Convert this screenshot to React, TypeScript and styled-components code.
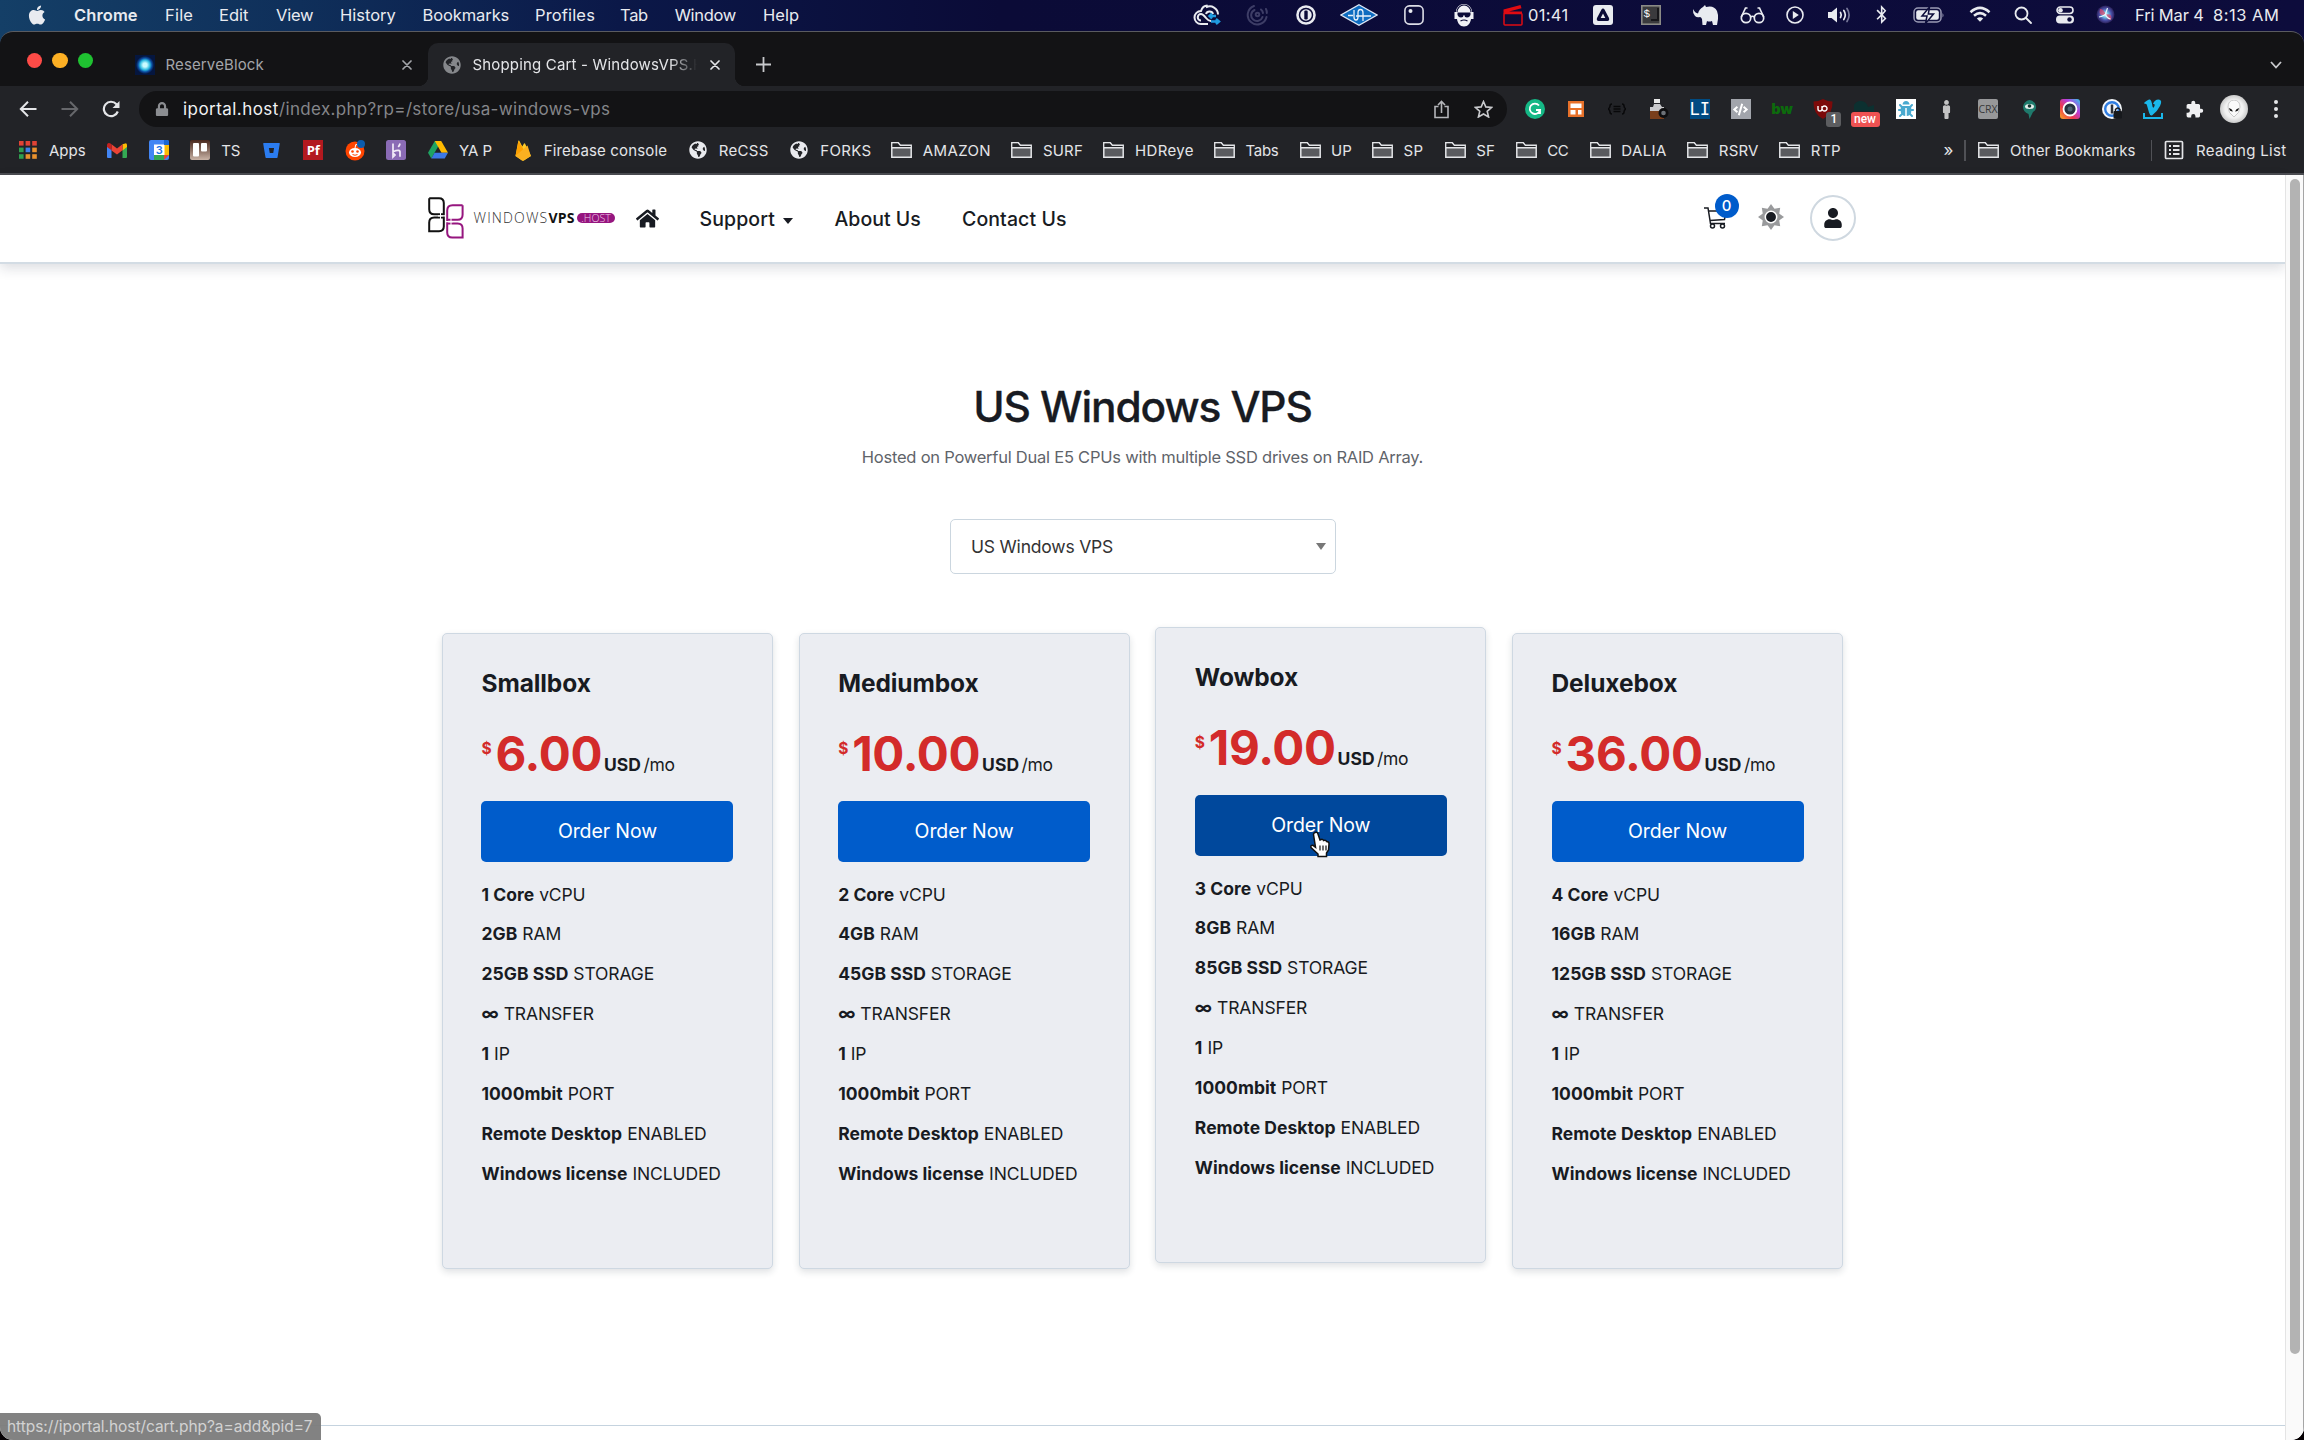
import React from "react";
import styled, { createGlobalStyle, css } from "styled-components";
import {
  FaApple, FaBluetoothB, FaHome, FaUser, FaPuzzlePiece, FaBug, FaBitbucket, FaCode, FaGlobeAmericas, FaLock, FaMale,
} from "react-icons/fa";

const Global = createGlobalStyle`
  * { box-sizing: border-box; }
  html, body { margin: 0; padding: 0; }
  body { background: #000; font-family: Inter, "Liberation Sans", sans-serif; overflow: hidden; }
`;

/* ---------- shared ---------- */
const Label = styled.span<{ $w?: number; $ls?: number; $ml?: number; $size?: number; $weight?: number; $color?: string }>`
  display: block;
  flex: none;
  white-space: nowrap;
  ${p => p.$w && css`width: ${p.$w}px;`}
  margin-left: ${p => p.$ml ?? 0}px;
  letter-spacing: ${p => p.$ls ?? 0}px;
  ${p => p.$size && css`font-size: ${p.$size}px;`}
  ${p => p.$weight && css`font-weight: ${p.$weight};`}
  ${p => p.$color && css`color: ${p.$color};`}
`;
const Slot = styled.span<{ $w?: number; $ml?: number; $c?: string; $fs?: number }>`
  position: relative;
  display: flex;
  flex: none;
  align-items: center;
  justify-content: center;
  width: ${p => p.$w ?? 20}px;
  min-height: 20px;
  margin-left: ${p => p.$ml ?? 0}px;
  color: ${p => p.$c ?? "inherit"};
  font-size: ${p => p.$fs ?? 20}px;
  svg { flex: none; display: block; }
`;
const Screen = styled.div`
  width: 2304px;
  height: 1440px;
  display: flex;
  flex-direction: column;
  overflow: hidden;
  background: linear-gradient(90deg, #143f67 0, #0f2f5a 300px, #0b1848 620px, #0b0b37 1000px, #0d0c3c 100%) top / 100% 60px no-repeat #050003;
`;

/* ---------- menu bar ---------- */
const MenuBar = styled.div`
  display: flex;
  align-items: center;
  height: 31px;
  padding-bottom: 1.500px;
  color: #e9ebf0;
  font-size: 16.500px;
  flex: none;
`;
const menus: [string, number, number, number][] = [
  ["File", 27, 27, 0.2], ["Edit", 27, 29, 0], ["View", 28, 37, -0.2], ["History", 27, 55, 0], ["Bookmarks", 27.5, 85.5, -0.1],
  ["Profiles", 27, 59, 0.15], ["Tab", 26, 28, -0.3], ["Window", 26.7, 61, -0.35], ["Help", 27.4, 35, 0],
];

const Cloud = () => (
  <svg width="28" height="24" viewBox="0 0 28 24" fill="none" stroke="#e9ebf0" strokeWidth="2">
    <path d="M13 4.500a8 8 0 0 1 12 7M8 21a6.500 6.500 0 0 1 0-13c1.200-4 4-5.500 6.500-5.500M8 21h7" />
    <path d="M8 17.500a3.200 3.200 0 0 1 0-6.500c2 0 3 1.500 5 4s3 3 5 3M13 11c1-3 6-3.500 7 0" />
    <path d="M23 13h-7m3-2.500L16.500 13l2.500 2.500M18 18.500h8m-3-2.500 3 2.500-3 2.500" stroke="#1f9be0" strokeWidth="2.400" />
  </svg>
);
const Spiral = () => (
  <svg width="22" height="22" viewBox="0 0 22 22" fill="none" stroke="#3d3d66" strokeWidth="2" strokeLinecap="round">
    <path d="M8 2a9.500 9.500 0 1 0 12.500 11M8.500 6a5.800 5.800 0 1 0 8 7M20 5a9 9 0 0 1 .8 4M15 5.500A6 6 0 0 1 17 9" /><circle cx="11.500" cy="10.500" r="1.800" />
  </svg>
);
const OnePass = () => (
  <svg width="20" height="20" viewBox="0 0 20 20"><circle cx="10" cy="10" r="9.800" fill="#e9ebf0" /><circle cx="10" cy="10" r="6.500" fill="none" stroke="#0b0b37" strokeWidth="1.500" /><rect x="8.300" y="5.500" width="3.400" height="9" rx="1.200" fill="#0b0b37" /></svg>
);
const Diamond = () => (
  <svg width="38" height="22" viewBox="0 0 38 22"><path d="M19 .8 37 11 19 21.200 1 11Z" fill="#0d6cc0" stroke="#dfe8f5" strokeWidth="1.300" /><path d="M8 11.500h5M14 6v7q0 3 2 3t2-3V9q0-3.500 2.500-3.500T23 9v8M16 12h15" fill="none" stroke="#e9f2fb" strokeWidth="1.300" /></svg>
);
const Tile = () => (
  <svg width="20" height="20" viewBox="0 0 20 20"><rect x=".9" y=".9" width="18.200" height="18.200" rx="4.500" fill="none" stroke="#dcdde6" strokeWidth="1.600" /><circle cx="6.500" cy="6" r="2" fill="#e9ebf0" /></svg>
);
const Beard = () => (
  <svg width="22" height="24" viewBox="0 0 22 24" fill="#f0f1f5"><path d="M3 9a8 8 0 0 1 16 0h1.500v7H18c-.5 4-3 7.500-7 7.500S4.500 20 4 16H1.500V9Z" /><path d="M4.500 9.500h13v2.500q-1 2.500-3.500 2.500T11.200 12h-.4q-.3 2.500-2.800 2.500T4.500 12Z" fill="#0b0b37" /><path d="M4 9a7 7 0 0 1 14 0M7.500 18q3.500-2 7 0" fill="none" stroke="#0b0b37" strokeWidth="1.200" /></svg>
);
const Clap = () => (
  <svg width="20" height="22" viewBox="0 0 20 22"><rect x="1" y="9.500" width="18" height="11.500" rx="1" fill="none" stroke="#e00b12" strokeWidth="1.500" /><path d="M.5 5.500 17.500 1l1 3.200L6 7.500h13V10H.5Z" fill="#e00b12" /></svg>
);
const AppA = () => (
  <svg width="20" height="20" viewBox="0 0 20 20"><rect width="20" height="20" rx="3" fill="#e9ebf0" /><path d="M10 3.500q1 0 1.500 1l4.500 8.500q.8 2.500-1.500 3h-9Q3.200 15.500 4 13l4.500-8.500q.5-1 1.500-1Z" fill="#0b0b37" /><path d="m10 8.500 2.300 4.500H7.700Z" fill="#e9ebf0" /></svg>
);
const Term = () => (
  <svg width="20" height="20" viewBox="0 0 20 20"><rect x=".8" y=".8" width="18.400" height="18.400" fill="#3a3a3d" stroke="#8a8a86" strokeWidth="1.600" /><text x="2.500" y="12" fontSize="11" fill="#fff" fontFamily="Liberation Mono">$</text><path d="M10 15h7V3" stroke="#17171b" strokeWidth="2" fill="none" /></svg>
);
const Rhino = () => (
  <svg width="27" height="22" viewBox="0 0 27 22" fill="#e9ebf0"><path d="M1 5q2 4 5 4.500Q7 5 11 3l2-2 1 2q8-2 11 4 1.500 4 1 8l-1 6h-4l-1-4q-3 1-5 0l-1 4h-3.500l-.5-6q-1-2-2-2-3 1-5-1Q.5 9 1 5Z" /></svg>
);
const Specs = () => (
  <svg width="25" height="18" viewBox="0 0 25 18" fill="none" stroke="#e9ebf0" strokeWidth="1.700"><circle cx="6" cy="12" r="4.700" /><circle cx="19" cy="12" r="4.700" /><path d="M10.500 11q2-1.500 4 0M1.300 11 5.500 2h2M23.700 11 19.500 2h-2" /></svg>
);
const Play = () => (
  <svg width="18" height="18" viewBox="0 0 18 18"><circle cx="9" cy="9" r="8" fill="none" stroke="#e9ebf0" strokeWidth="1.600" /><path d="m6.800 5 6 4-6 4Z" fill="#e9ebf0" /></svg>
);
const Volume = () => (
  <svg width="25" height="18" viewBox="0 0 25 18" fill="none" stroke="#e9ebf0" strokeWidth="1.700" strokeLinecap="round"><path d="M1 6h3.500L10 1.500v15L4.500 12H1Z" fill="#e9ebf0" stroke="none" /><path d="M13.500 6.500q1.500 2.500 0 5M16.800 4.500q3 4.500 0 9" /><path d="M20 2.500q4.200 6.500 0 13" stroke="#77789a" /></svg>
);
const Battery = () => (
  <svg width="32" height="18" viewBox="0 0 32 18"><rect x="1" y="2" width="27" height="14" rx="4" fill="none" stroke="#9a9bb5" strokeWidth="1.500" /><rect x="3.200" y="4.200" width="22.600" height="9.600" rx="2" fill="#e9ebf0" /><path d="M29.500 7v4.500q2-2.200 0-4.500Z" fill="#9a9bb5" /><path d="M16.500 1 9 10h5l-1.500 7.500L20.500 8h-5.200Z" fill="#e9ebf0" stroke="#0c0c3a" strokeWidth="1.500" /></svg>
);
const Wifi = () => (
  <svg width="22" height="17" viewBox="0 0 22 17" fill="none" stroke="#e9ebf0" strokeWidth="2.600"><path d="M1.500 6.200q9.500-8.500 19 0M5 9.800q6-5.200 12 0" /><path d="M11 15.800 7.800 12.600q3.200-2.600 6.400 0Z" fill="#e9ebf0" stroke="none" /></svg>
);
const Search = () => (
  <svg width="18" height="18" viewBox="0 0 18 18" fill="none" stroke="#e9ebf0" strokeWidth="1.800"><circle cx="7.500" cy="7.500" r="6" /><path d="m12 12 5 5" strokeLinecap="round" /></svg>
);
const Control = () => (
  <svg width="18" height="18" viewBox="0 0 18 18"><rect x="1" y="1" width="16" height="6.500" rx="3.250" fill="none" stroke="#e9ebf0" strokeWidth="1.600" /><circle cx="4.500" cy="4.250" r="2.300" fill="#e9ebf0" /><rect y="9.500" width="18" height="8" rx="4" fill="#e9ebf0" /><circle cx="13.500" cy="13.500" r="2.200" fill="#0c0c3a" /></svg>
);
const Siri = () => (
  <svg width="19" height="19" viewBox="0 0 19 19"><defs><radialGradient id="si"><stop offset="0" stopColor="#fff" /><stop offset=".3" stopColor="#6fc7e8" /><stop offset=".65" stopColor="#4a4fa8" /><stop offset="1" stopColor="#2a1f58" /></radialGradient></defs><circle cx="9.500" cy="9.500" r="9" fill="url(#si)" /><path d="M9.500 9.500Q2 12 4 4q4 0 5.500 5.500ZM9.500 9.500Q17 8 15 15q-4 0-5.500-5.500Z" fill="#d8486f" opacity=".75" /><path d="M3 12q5-1 6.500-3 1 4 5 5M9.500 9l2-6" stroke="#e6f6ff" strokeWidth="1.200" fill="none" /></svg>
);
const statusLeft: [React.ReactNode, number, number][] = [
  [<Spiral />, 20, 27], [<OnePass />, 20, 29.5], [<Diamond />, 38, 24], [<Tile />, 20, 25.5], [<Beard />, 22, 29], [<Clap />, 20, 28],
];
const statusRight: [React.ReactNode, number, number][] = [
  [<AppA />, 20, 24.5], [<Term />, 20, 28.5], [<Rhino />, 26, 31], [<Specs />, 24, 22], [<Play />, 18, 22], [<Volume />, 24, 23],
  [<FaBluetoothB size={19} />, 14, 23.5], [<Battery />, 32, 24.5], [<Wifi />, 22, 24], [<Search />, 18, 23], [<Control />, 18, 24], [<Siri />, 18, 22],
];

/* ---------- browser chrome ---------- */
const Window = styled.div`
  position: relative;
  flex: 1;
  min-height: 0;
  display: flex;
  flex-direction: column;
  border-radius: 13px;
  overflow: hidden;
  border-top: 1.500px solid #5a5b60;
  background: #131315;
`;
const TabStrip = styled.div`
  display: flex;
  align-items: flex-end;
  height: 54px;
  flex: none;
  font-size: 15px;
`;
const Lights = styled.div`
  display: flex;
  gap: 10px;
  padding: 0 41.500px 18px 26.500px;
`;
const Light = styled.i<{ $c: string }>`
  width: 15.500px;
  height: 15.500px;
  border-radius: 50%;
  background: ${p => p.$c};
`;
const Tab = styled.div<{ $active?: boolean; $w: number }>`
  position: relative;
  display: flex;
  align-items: center;
  flex: none;
  width: ${p => p.$w}px;
  height: 43px;
  color: ${p => (p.$active ? "#e4e5e8" : "#a3a5a9")};
  ${p => p.$active && css`
    background: #222327;
    border-radius: 10px 10px 0 0;
    padding-left: 15px;
    &::before, &::after {
      content: "";
      position: absolute;
      bottom: 0;
      width: 10px;
      height: 10px;
    }
    &::before { left: -10px; background: radial-gradient(circle at 0 0, transparent 10px, #222327 10.500px); }
    &::after { right: -10px; background: radial-gradient(circle at 100% 0, transparent 10px, #222327 10.500px); }
  `}
`;
const TabTitle = styled(Label)<{ $fade?: boolean }>`
  overflow: hidden;
  ${p => p.$fade && css`mask-image: linear-gradient(90deg, #000 88%, transparent 100%);`}
`;
const Grow = styled.div`flex: 1;`;
const Favicon = styled.i`
  width: 20px;
  height: 20px;
  background: radial-gradient(circle, #c9fbff 0 2px, #2bb9e0 5px, #0b4aa0 7px, #05163f 9px);
`;
const Cross = () => (
  <svg width="10" height="10" viewBox="0 0 10 10" stroke="currentColor" strokeWidth="1.700" strokeLinecap="round"><path d="m1 1 8 8M9 1 1 9" /></svg>
);
const Toolbar = styled.div`
  display: flex;
  align-items: center;
  height: 46px;
  padding-left: 16px;
  flex: none;
  background: #222327;
`;
const Omnibox = styled.div`
  display: flex;
  align-items: center;
  width: 1368px;
  height: 36px;
  flex: none;
  margin-left: 16px;
  border-radius: 18px;
  background: #131315;
  color: #85868a;
  font-size: 17px;
`;
const Extensions = styled.div`
  display: flex;
  align-items: center;
  gap: 21.200px;
  margin-left: 18px;
`;
const Square = styled.span<{ $bg: string; $c?: string; $fs?: number; $ff?: string; $r?: number; $b?: number }>`
  display: flex;
  align-items: center;
  justify-content: center;
  flex: none;
  width: 20px;
  height: 20px;
  border-radius: ${p => p.$r ?? 0}px;
  background: ${p => p.$bg};
  color: ${p => p.$c ?? "#fff"};
  font: ${p => p.$b ?? 400} ${p => p.$fs ?? 13}px/20px ${p => p.$ff ?? "Inter"}, sans-serif;
`;
const Badge = styled.span<{ $bg: string; $w: number; $l: number }>`
  position: absolute;
  left: ${p => p.$l}px;
  top: 13px;
  width: ${p => p.$w}px;
  height: 15px;
  border-radius: 3px;
  background: ${p => p.$bg};
  color: #fff;
  font: 500 12px/15px Roboto, sans-serif;
  text-align: center;
`;
const Avatar = styled.span`
  display: flex;
  align-items: center;
  justify-content: center;
  width: 28px;
  height: 28px;
  margin-left: 16px;
  border-radius: 50%;
  background: radial-gradient(circle, #f2f2f2 45%, #bcbcbc 80%);
`;
const Bookmarks = styled.div`
  display: flex;
  align-items: center;
  gap: 21.550px;
  height: 42.500px;
  padding: 0 0 4px 18px;
  flex: none;
  background: #222327;
  color: #e4e5e8;
  font-size: 15px;
  border-bottom: 2px solid #4b4c51;
`;
const Mark = styled.div<{ $gap?: number; $ml?: number }>`
  display: flex;
  align-items: center;
  gap: ${p => p.$gap ?? 11}px;
  margin-left: ${p => p.$ml ?? 0}px;
  flex: none;
`;
const Divider = styled.i`
  width: 1.500px;
  height: 21px;
  background: #505156;
`;
const Folder = () => (
  <svg width="21" height="18" viewBox="0 0 21 18" fill="#5a5b5f" stroke="#e4e5e8" strokeWidth="1.500"><path d="M.8 16.200V1.800h6.500l2 2.400h10.900v12Z" /><path d="M1.500 2.600h5.300l2 2.300h10.700v1H1.500Z" fill="#222327" stroke="none" /><path d="M.8 6.800h19.400" /></svg>
);
const AppsGrid = () => (
  <svg width="18" height="18" viewBox="0 0 18 18">
    {["#e04335", "#e04335", "#e04335", "#2f9e4f", "#3f7fe8", "#e8912d", "#2f9e4f", "#e8912d", "#e8912d"].map((c, i) => (
      <rect key={i} x={(i % 3) * 6.6} y={Math.floor(i / 3) * 6.6} width="4.600" height="4.600" fill={c} />
    ))}
  </svg>
);
const Gmail = () => (
  <svg width="20" height="15" viewBox="0 0 20 15"><path d="M0 2v12q0 1 1 1h3.500V6Z" fill="#4285f4" /><path d="M20 2v12q0 1-1 1h-3.500V6Z" fill="#34a853" /><path d="M15.500 1.300 19 .2q1 .6 1 2V4l-4.500 3.400Z" fill="#fbbc04" /><path d="M4.500 1.300 10 5.500l5.500-4.200v6L10 11.500 4.500 7.400Z" fill="#ea4335" /><path d="M0 4V2.200Q0 .8 1 .2q1.500-.5 3.500 1.100v6Z" fill="#c5221f" /></svg>
);
const Calendar = () => (
  <svg width="20" height="20" viewBox="0 0 20 20"><rect width="20" height="20" rx="2" fill="#4285f4" /><path d="M15 5h5v10h-5Z" fill="#fbbc04" /><path d="M5 15h10v5H5Z" fill="#34a853" /><path d="M15 15h5l-5 5Z" fill="#ea4335" /><path d="M5 4.500h10.500V15H5Z" fill="#fff" /><path d="M15 0h3q2 0 2 2v3h-5Z" fill="#1967d2" /><text x="6.700" y="14" fontSize="11" fontWeight="600" fill="#1a73e8" fontFamily="Inter">3</text></svg>
);
const Trello = () => (
  <svg width="20" height="20" viewBox="0 0 20 20"><defs><linearGradient id="tr" x1="0" y1="0" x2="0" y2="1"><stop offset="0" stopColor="#49281d" /><stop offset="1" stopColor="#c9b3a6" /></linearGradient></defs><rect width="20" height="20" rx="2" fill="url(#tr)" /><rect x="3" y="3" width="6" height="13.500" rx="1" fill="#fff" /><rect x="11" y="3" width="6" height="8.500" rx="1" fill="#fff" /></svg>
);
const Reddit = () => (
  <svg width="20" height="21" viewBox="0 0 20 21"><circle cx="10" cy="11" r="9.500" fill="#ff4500" /><ellipse cx="10" cy="12.500" rx="6" ry="4.500" fill="#fff" /><circle cx="7.500" cy="11.500" r="1.300" fill="#ff4500" /><circle cx="12.500" cy="11.500" r="1.300" fill="#ff4500" /><path d="M7.500 14.500q2.500 1.500 5 0" stroke="#ff4500" fill="none" /><path d="m10 8 .8-3.500 3 .6" stroke="#fff" fill="none" /><circle cx="16" cy="4" r="4" fill="#0b5cad" /></svg>
);
const Heroku = () => (
  <svg width="20" height="20" viewBox="0 0 20 20"><rect width="20" height="20" rx="2.500" fill="#8a6bb5" /><path d="M7 3.500v8.200q7.500-3 7 1v4M14 3.500q-.3 2-1.800 3.500M7 13v4l2-2Z" stroke="#f1ebf8" strokeWidth="1.700" fill="none" /></svg>
);
const Drive = () => (
  <svg width="20" height="18" viewBox="0 0 20 18"><path d="M6.800 0h6.400L10 5.800 3.300 17.500 0 11.800Z" fill="#1ea362" /><path d="M6.800 0h6.400l6.800 11.800h-6.500Z" fill="#ffba00" /><path d="M6.600 11.800H20l-3.300 5.700H3.300Z" fill="#3b78e7" /></svg>
);
const Firebase = () => (
  <svg width="18" height="21" viewBox="0 0 18 21"><path d="M1.500 16 4.300.8q.4-.8 1 0l3 5.600L10 3.500q.5-.6 1 0L17 16l-7 4.500q-1 .5-2 0Z" fill="#ffca28" /><path d="m1.500 16 3-15 5.500 9Z" fill="#ffa000" /><path d="M1.500 16 13.500 5.500 16.800 16l-7 4.300q-1 .5-2 0Z" fill="#fbb020" /></svg>
);
const ReadingIcon = () => (
  <svg width="20" height="20" viewBox="0 0 20 20" fill="none" stroke="#e4e5e8" strokeWidth="1.700"><rect x="1.500" y="1.500" width="17" height="17" rx="1" /><path d="M5 6h2M9 6h6.500M5 10h2M9 10h6.500M5 14h2M9 14h6.500" strokeWidth="2" /></svg>
);
const Globe = styled(FaGlobeAmericas)`color: #e9eaee;`;

type BookmarkEntry = [React.ReactNode, string?, number?, number?];
const f = <Folder />;
const marks: BookmarkEntry[] = [
  [<AppsGrid />, "Apps", 36.5], [<Gmail />], [<Calendar />], [<Trello />, "TS", 19], [<FaBitbucket size={17} color="#2b7cf0" />],
  [<Square $bg="#b3191f" $fs={13} $b={700} $ff="Open Sans">Pf</Square>], [<Reddit />], [<Heroku />], [<Drive />, "YA P", 32.3], [<Firebase />, "Firebase console", 122.5, 0.15],
  [<Globe size={18} />, "ReCSS", 49, 0.3], [<Globe size={18} />, "FORKS", 50, 0.3], [f, "AMAZON", 67.5, 0.35], [f, "SURF", 39.5, 0.2], [f, "HDReye", 58, 0.35], [f, "Tabs", 33, -0.3],
  [f, "UP", 20], [f, "SP", 20, 0.3], [f, "SF", 18.5, 0.2], [f, "CC", 21.5, -0.3], [f, "DALIA", 45, 0.4], [f, "RSRV", 39.5, 0.2], [f, "RTP", 29.5, 0.4],
];

/* ---------- page ---------- */
const Viewport = styled.div`
  display: flex;
  flex: 1;
  min-height: 0;
  background: #fff;
`;
const Page = styled.div`
  width: 2285px;
  display: flex;
  flex-direction: column;
  color: #181b22;
`;
const ScrollTrack = styled.div`
  width: 19px;
  padding: 4px 0 0 4px;
  background: #fafafa;
  border-left: 1px solid #e4e4e4;
  border-right: 1px solid #a5a5a5;
`;
const Thumb = styled.div`
  width: 10px;
  height: 1175px;
  border-radius: 5px;
  background: #b3b3b3;
`;
const Header = styled.header`
  display: flex;
  align-items: center;
  height: 89px;
  padding-left: 428px;
  flex: none;
  border-bottom: 2px solid #d3dce4;
  box-shadow: 0 4px 12px rgba(30, 40, 60, .16);
`;
const LogoText = styled.span`
  display: block;
  width: 103.500px;
  margin-left: 9.500px;
  font: 300 14px/20px "Open Sans", sans-serif;
  letter-spacing: 1.150px;
  white-space: nowrap;
  color: #333;
  b { font-weight: 700; color: #111; letter-spacing: .2px; }
`;
const HostPill = styled.span`
  width: 38px;
  height: 10.500px;
  border-radius: 5px;
  background: #96167f;
  color: #f0c9e8;
  font: 300 10.500px/10.500px "Open Sans", sans-serif;
  text-align: center;
`;
const NavItem = styled(Label)`
  padding-top: 2px;
  font-size: 19.500px;
  font-weight: 500;
`;
const Caret = styled.i`
  margin: 6px 0 0 8px;
  border: 5px solid transparent;
  border-top: 6px solid #181b22;
  border-bottom: 0;
`;
const CartBadge = styled.span`
  position: absolute;
  left: 11px;
  top: -13px;
  width: 24px;
  height: 24px;
  border-radius: 50%;
  background: #005ccb;
  color: #fff;
  font: 500 15px/24px Inter, sans-serif;
  text-align: center;
`;
const UserRing = styled.span`
  display: flex;
  align-items: center;
  justify-content: center;
  width: 46px;
  height: 46px;
  margin-left: 26px;
  border: 2.500px solid #cfd8e0;
  border-radius: 50%;
`;
const Main = styled.main`
  display: flex;
  flex-direction: column;
  align-items: center;
  flex: 1;
`;
const Title = styled.h1`
  margin: 115px 0 12px;
  font-size: 42.500px;
  line-height: 56px;
  font-weight: 500;
  letter-spacing: -1.150px;
  -webkit-text-stroke: .3px #181b22;
`;
const Select = styled.div`
  display: flex;
  align-items: center;
  justify-content: space-between;
  width: 386px;
  height: 55px;
  margin-top: 52.500px;
  padding: 0 9px 0 20.500px;
  border: 1.500px solid #cbd6df;
  border-radius: 5px;
  font-size: 17.500px;
  letter-spacing: -.2px;
  color: #333;
`;
const SelectArrow = styled.i`
  border: 5px solid transparent;
  border-top: 7px solid #777;
  border-bottom: 0;
`;
const Cards = styled.div`
  display: flex;
  gap: 25.700px;
  margin-top: 58.500px;
`;
const Card = styled.article<{ $raised?: boolean }>`
  width: 331px;
  height: 636px;
  padding: 29px 38.500px 0;
  border: 1.500px solid #ced8e2;
  border-radius: 5px;
  background: #ebedf2;
  box-shadow: 0 3px 7px rgba(30, 40, 60, .14);
  transform: translateY(${p => (p.$raised ? -6 : 0)}px);
`;
const CardName = styled.h2`
  margin: 0;
  font-size: 24.500px;
  line-height: 40px;
  font-weight: 700;
  letter-spacing: -.1px;
`;
const Price = styled.div`
  display: flex;
  align-items: baseline;
  height: 60px;
  margin-top: 21px;
  line-height: 60px;
`;
const Dollar = styled.span`
  align-self: flex-start;
  width: 14px;
  margin-top: -5px;
  font-size: 15.500px;
  font-weight: 700;
  color: #d32b2a;
`;
const Button = styled.div<{ $hover?: boolean }>`
  position: relative;
  display: flex;
  align-items: center;
  justify-content: center;
  height: 61px;
  margin-top: 17px;
  border-radius: 5px;
  color: #fff;
  font-size: 19.500px;
  letter-spacing: -.1px;
  background: ${p => (p.$hover ? "#00489c" : "#005ccb")};
`;
const Pointer = styled.svg`
  position: absolute;
  left: 114px;
  top: 36.500px;
`;
const Features = styled.ul`
  list-style: none;
  margin: 13px 0 0;
  padding: 0;
  font-size: 17.500px;
  line-height: 39.900px;
`;
const Feature = styled.li`
  display: flex;
  gap: 5px;
  white-space: nowrap;
  b { letter-spacing: .03px; }
  span { letter-spacing: -.12px; }
`;
const FooterLine = styled.div`
  height: 15.500px;
  border-top: 1px solid #c5d3df;
`;
const StatusBubble = styled.div`
  position: absolute;
  left: 0;
  bottom: 0;
  width: 321px;
  height: 27px;
  padding-left: 7px;
  border-radius: 0 5px 0 0;
  background: rgba(122, 122, 122, .94);
  color: #d2d2d2;
  font-size: 15.500px;
  line-height: 27px;
  letter-spacing: -.06px;
`;
const boxes = [
  { name: "Smallbox", price: "6.00", cpu: "1 Core", ram: "2GB", ssd: "25GB SSD" },
  { name: "Mediumbox", price: "10.00", cpu: "2 Core", ram: "4GB", ssd: "45GB SSD" },
  { name: "Wowbox", price: "19.00", cpu: "3 Core", ram: "8GB", ssd: "85GB SSD", raised: true },
  { name: "Deluxebox", price: "36.00", cpu: "4 Core", ram: "16GB", ssd: "125GB SSD" },
];

export default function App() {
  return (
    <Screen>
      <Global />
      <MenuBar>
        <Slot $w={20} $ml={27} $fs={22}><FaApple /></Slot>
        <Label $ml={27} $w={64} $weight={600} $ls={0.1}>Chrome</Label>
        {menus.map(([t, ml, w, ls]) => <Label key={t} $ml={ml} $w={w} $ls={ls}>{t}</Label>)}
        <Slot $w={26} $ml={395.5}><Cloud /></Slot>
        {statusLeft.map(([n, w, ml], i) => <Slot key={i} $w={w} $ml={ml}>{n}</Slot>)}
        <Label $ml={5.5} $w={40} $ls={0.3}>01:41</Label>
        {statusRight.map(([n, w, ml], i) => <Slot key={i} $w={w} $ml={ml}>{n}</Slot>)}
        <Label $ml={21} $w={67.5} $ls={-0.15}>Fri Mar 4</Label>
        <Label $ml={10.5} $ls={0.5}>8:13 AM</Label>
      </MenuBar>
      <Window>
        <TabStrip>
          <Lights><Light $c="#fe4b47" /><Light $c="#fdb024" /><Light $c="#1fc231" /></Lights>
          <Tab $w={293}>
            <Favicon />
            <TabTitle $ml={11} $w={235.5} $ls={0.13}>ReserveBlock</TabTitle>
            <Slot $w={12}><Cross /></Slot>
          </Tab>
          <Tab $w={307} $active>
            <Slot $w={19} $c="#85878b" $fs={18}><FaGlobeAmericas /></Slot>
            <TabTitle $ml={11} $w={224} $ls={0.17} $fade>Shopping Cart - WindowsVPS.H</TabTitle>
            <Slot $w={12} $ml={12}><Cross /></Slot>
          </Tab>
          <Tab $w={60}><Slot $w={14} $ml={21.5} $c="#c8c9cc"><svg width="15" height="15" viewBox="0 0 15 15" stroke="currentColor" strokeWidth="1.800"><path d="M7.500 0v15M0 7.500h15" /></svg></Slot></Tab>
          <Grow />
          <Tab $w={34}><svg width="12" height="8" viewBox="0 0 12 8" fill="none" stroke="#c8c9cc" strokeWidth="1.800"><path d="m1 1 5 5.500L11 1" /></svg></Tab>
        </TabStrip>
        <Toolbar>
          <Slot $w={24} $c="#e4e5e8"><svg width="18" height="16" viewBox="0 0 18 16" fill="none" stroke="currentColor" strokeWidth="2"><path d="M17.500 8H2M9 .8 1.800 8 9 15.200" /></svg></Slot>
          <Slot $w={24} $ml={17.5} $c="#66676b"><svg width="18" height="16" viewBox="0 0 18 16" fill="none" stroke="currentColor" strokeWidth="2"><path d="M.5 8H16M9 .8 16.200 8 9 15.200" /></svg></Slot>
          <Slot $w={24} $ml={17.5} $c="#e4e5e8"><svg width="18" height="18" viewBox="0 0 18 18" fill="none" stroke="currentColor" strokeWidth="2.200"><path d="M15.800 11.500A7.200 7.200 0 1 1 14.500 4.200L16 6" /><path d="M17.500 1v7h-7Z" fill="currentColor" stroke="none" /></svg></Slot>
          <Omnibox>
            <Slot $w={12} $ml={17} $fs={14} $c="#8b8d91"><FaLock /></Slot>
            <Label $ml={15} $w={96} $ls={0.45} $color="#f0f1f3">iportal.host</Label>
            <Label $ls={0.33}>/index.php?rp=/store/usa-windows-vps</Label>
            <Grow />
            <Slot $w={20} $c="#b5b6ba"><svg width="15" height="19" viewBox="0 0 15 19" fill="none" stroke="currentColor" strokeWidth="1.600"><path d="M4.500 6.500H1v11h13v-11h-3.500M7.500 13V1.500M4 5l3.500-3.500L11 5" /></svg></Slot>
            <Slot $w={20} $ml={21.5} $c="#c8c9cc"><svg width="19" height="18" viewBox="0 0 19 18" fill="none" stroke="currentColor" strokeWidth="1.600"><path d="m9.500 1.500 2.300 5.400 5.900.5-4.500 3.900 1.400 5.700-5.100-3-5.100 3 1.400-5.700L1.300 7.400l5.900-.5Z" /></svg></Slot>
            <Slot $w={14} />
          </Omnibox>
          <Extensions>
            <Slot><svg width="20" height="20" viewBox="0 0 20 20"><circle cx="10" cy="10" r="10" fill="#15b886" /><path d="M14 6.500A5.200 5.200 0 1 0 15 11h-4M15 11v4" fill="none" stroke="#fff" strokeWidth="1.800" /></svg></Slot>
            <Slot><svg width="16" height="16" viewBox="0 0 16 16"><rect width="16" height="16" fill="#e8712a" /><path d="M2.500 2.500h11V7h-11ZM2.500 9h5v4.500h-5ZM10 9h3.500v4.500H10Z" fill="#fff" /></svg></Slot>
            <Slot><svg width="18" height="12" viewBox="0 0 18 12" fill="none" stroke="#08080a" strokeWidth="1.500"><path d="M4 1Q2 1 2 3t-2 3q2 1 2 3t2 2M14 1q2 0 2 2t2 3q-2 1-2 3t-2 2M5.500 3.500h7M5.500 6h7M5.500 8.500h7" /></svg></Slot>
            <Slot><svg width="20" height="21" viewBox="0 0 20 21"><rect x="5" y="0" width="6" height="4" fill="#e8e8e8" /><path d="M1 8h3l1-3h6l2 3h2v5H1Z" fill="#c9c9cc" /><rect x="1" y="12" width="14" height="8" fill="#7a3f1c" /><circle cx="14.500" cy="14" r="5" fill="#0e0e10" /><circle cx="14.500" cy="14" r="2.300" fill="#6d7278" /></svg></Slot>
            <Slot><Square $bg="#004b82" $fs={17} $ff="DejaVu Sans Mono">LI</Square></Slot>
            <Slot><Square $bg="#a2a5ac"><FaCode size={15} /></Square></Slot>
            <Slot><Square $bg="transparent" $c="#0c6b0c" $b={900} $fs={14}>bw</Square></Slot>
            <Slot><svg width="20" height="20" viewBox="0 0 20 20"><path d="M10 0q5 2.500 9.500 2.500Q20 15 10 20 0 15 .5 2.500 5 2.500 10 0Z" fill="#7c0a0a" /><path d="M5 7v3q0 2 2 2t2-2V7M9 9.500a2.500 2.500 0 1 0 5 0 2.500 2.500 0 1 0-5 0" stroke="#fff" strokeWidth="1.400" fill="none" /></svg><Badge $bg="#5c5d60" $w={15} $l={13}>1</Badge></Slot>
            <Slot><svg width="21" height="16" viewBox="0 0 21 16" fill="#0c3030"><path d="M7 0a7 7 0 0 1 7 6l6-2v8l-6-2H0a7 7 0 0 1 7-10Z" /></svg><Badge $bg="#ee5252" $w={29} $l={-4}>new</Badge></Slot>
            <Slot><Square $bg="#fff" $c="#49a9cf"><FaBug size={16} /></Square></Slot>
            <Slot $c="#c3c3c3"><FaMale size={19} /></Slot>
            <Slot><Square $bg="#97989a" $c="#37383b" $fs={10.5} $r={2} $ff="Open Sans">CRX</Square></Slot>
            <Slot><svg width="15" height="19" viewBox="0 0 15 19"><path d="M7.500 0q5.500 1 6.500 6 .5 4-3 6l-3.500 7-1-5Q1 12 1 6.500 2 1 7.500 0Z" fill="#1f7a6c" /><ellipse cx="7.500" cy="6.500" rx="4.500" ry="2.500" fill="#e6efec" /><circle cx="7.500" cy="6" r="1.800" fill="#12332e" /></svg></Slot>
            <Slot><svg width="20" height="20" viewBox="0 0 20 20"><defs><linearGradient id="cam" x1="0" y1="1" x2="1" y2="0"><stop offset="0" stopColor="#f9a825" /><stop offset=".35" stopColor="#ee3a4c" /><stop offset=".65" stopColor="#b63fe0" /><stop offset="1" stopColor="#2fc9e8" /></linearGradient></defs><rect width="20" height="20" rx="3" fill="url(#cam)" /><circle cx="10" cy="10" r="6.500" fill="#26323e" stroke="#fff" strokeWidth="1.800" /><circle cx="10" cy="10" r="2.500" fill="#4d6472" /></svg></Slot>
            <Slot><svg width="20" height="20" viewBox="0 0 20 20"><circle cx="10" cy="10" r="10" fill="#f4f7fb" /><circle cx="10" cy="10" r="6.800" fill="none" stroke="#2f7de1" strokeWidth="2.400" /><path d="M10 5.500v9" stroke="#2a2f38" strokeWidth="2.500" /><rect x="11.500" y="12" width="8.500" height="7.500" rx="1" fill="#17191d" /><path d="M13.500 12v-1.500q2.300-3 4.500 0V12" stroke="#17191d" strokeWidth="1.500" fill="none" /></svg></Slot>
            <Slot><svg width="20" height="20" viewBox="0 0 20 20"><path d="M1 14v5h18v-5" fill="none" stroke="#1ab7ea" strokeWidth="2" /><path d="M1 4q4-4 6-3.500 1.500.5 2.500 7 .8 2.500 2-.5 1-2.500-1.500-2Q11.500.5 15.500.5 20 1 17 7q-3 6-8 9.500-2 .5-3-3l-2-7Q3.500 4 2 5Z" fill="#1ab7ea" /></svg></Slot>
            <Slot $c="#f0f0f2"><svg width="19" height="19" viewBox="0 0 24 24" fill="currentColor"><path d="M20.500 11H19V7a2 2 0 0 0-2-2h-4V3.500a2.500 2.500 0 0 0-5 0V5H4a2 2 0 0 0-2 2v3.800h1.500a2.700 2.700 0 0 1 0 5.400H2V20a2 2 0 0 0 2 2h3.800v-1.500a2.700 2.700 0 0 1 5.400 0V22H17a2 2 0 0 0 2-2v-4h1.500a2.500 2.500 0 0 0 0-5Z" /></svg></Slot>
          </Extensions>
          <Avatar><svg width="14" height="18" viewBox="0 0 14 18"><path d="M7 0q6 .5 6 7 0 6-6 10-6-4-6-10Q1 .5 7 0Z" fill="#fafafa" stroke="#c9c9c9" /><path d="M2 8q3 .5 4 3.500Q2.500 11.500 2 8ZM12 8q-3 .5-4 3.500 3.500 0 4-3.500Z" fill="#111" /></svg></Avatar>
          <Slot $w={8} $ml={23.5}><svg width="4" height="18" viewBox="0 0 4 18" fill="#e4e5e8"><circle cx="2" cy="2" r="2" /><circle cx="2" cy="9" r="2" /><circle cx="2" cy="16" r="2" /></svg></Slot>
        </Toolbar>
        <Bookmarks>
          {marks.map(([icon, t, w, ls], i) => (
            <Mark key={i}><Slot>{icon}</Slot>{t && <Label $w={w} $ls={ls}>{t}</Label>}</Mark>
          ))}
          <Grow />
          <Mark>
            <Label $size={17} $ml={-4}>»</Label>
            <Divider />
            <Slot $ml={2}><Folder /></Slot>
            <Label $w={126} $ls={0.15}>Other Bookmarks</Label>
          </Mark>
          <Mark $gap={12} $ml={-7}><Divider /><Slot><ReadingIcon /></Slot><Label $w={108} $ls={0.3}>Reading List</Label></Mark>
        </Bookmarks>
        <Viewport>
          <Page>
            <Header>
              <svg width="36" height="42" viewBox="0 0 36 42" fill="none" strokeWidth="2">
                <g stroke="#111"><path d="M1.200 1.200H11q4.800 0 4.800 4.800v23.500q0 4.700-4.800 4.700H1.200v-8.700q0-5 5-5h9.600M1.200 1.200v11q0 5 5 5h9.600" /></g>
                <g stroke="#96167f"><path d="M34.600 8.200h-10q-5.400 0-5.400 5.300v22q0 5 5 5h10.400v-9q0-5-5-5H19.200M34.600 8.200v9.500q0 5-5 5H19.200" /></g>
                <path d="M10 18.900h7M18 24.600h7" stroke="#fff" strokeWidth="1.200" /><path d="M12.500 15v7M23 21v7" stroke="#fff" strokeWidth="1" />
              </svg>
              <LogoText>WINDOWS<b>VPS</b></LogoText>
              <HostPill>.HOST</HostPill>
              <Slot $w={23} $ml={20.5} $fs={23}><FaHome /></Slot>
              <NavItem $ml={41} $w={75.5} $ls={0.1}>Support</NavItem>
              <Caret />
              <NavItem $ml={41.5} $w={85.5}>About Us</NavItem>
              <NavItem $ml={42} $w={104} $ls={0.1}>Contact Us</NavItem>
              <Slot $w={23} $ml={637.5}>
                <svg width="23" height="22" viewBox="0 0 23 22" fill="none" stroke="#181b22" strokeWidth="1.500"><path d="M0 1h4l2.500 15.500H21M4.500 4H22l-1.500 8.500L6 13.500" /><circle cx="8.500" cy="19" r="2" /><circle cx="18.500" cy="19" r="2" /></svg>
                <CartBadge>0</CartBadge>
              </Slot>
              <Slot $w={26} $ml={31}><svg width="26" height="28" viewBox="-13 -13 26 28">{[0, 45, 90, 135, 180, 225, 270, 315].map(a => <path key={a} d="M-5 -6 0 -13 5 -6Z" fill="#999a9c" transform={`rotate(${a})`} />)}<circle r="8" fill="#999a9c" /><circle r="5.700" fill="#181b22" stroke="#fff" strokeWidth="1.500" /></svg></Slot>
              <UserRing><FaUser size={20} /></UserRing>
            </Header>
            <Main>
              <Title>US Windows VPS</Title>
              <Label $size={16.5} $ls={-0.24} $color="#5f646a">Hosted on Powerful Dual E5 CPUs with multiple SSD drives on RAID Array.</Label>
              <Select><Label $ls={-0.2}>US Windows VPS</Label><SelectArrow /></Select>
              <Cards>
                {boxes.map(b => (
                  <Card key={b.name} $raised={b.raised}>
                    <CardName>{b.name}</CardName>
                    <Price>
                      <Dollar>$</Dollar>
                      <Label $size={47.5} $weight={700} $ls={-0.3} $color="#d32b2a">{b.price}</Label>
                      <Label $ml={1.8} $size={17.5} $weight={700}>USD</Label>
                      <Label $ml={2.5} $size={17.5} $ls={-0.3}>/mo</Label>
                    </Price>
                    <Button $hover={b.raised}>
                      <span>Order Now</span>
                      {b.raised && <Pointer width="22" height="27" viewBox="0 0 22 27"><path d="M6 1.500q2-1 2.800 1L11 9q3-1.500 3.500.5 2.500-.8 3 1 2.700 0 2.500 2.500L19.500 19l-2 3v3.500H9V23L2 16.500q-.8-2.500 2-2.200l2.500 2L4.500 3.500Q4.500 2 6 1.500Z" fill="#fff" stroke="#111" strokeWidth="1.500" /><path d="M11 14.500v5M14 14.500v5M17 14.500v5" stroke="#111" strokeWidth="1.200" /></Pointer>}
                    </Button>
                    <Features>
                      {[[b.cpu, "vCPU"], [b.ram, "RAM"], [b.ssd, "STORAGE"], ["∞", "TRANSFER"], ["1", "IP"], ["1000mbit", "PORT"], ["Remote Desktop", "ENABLED"], ["Windows license", "INCLUDED"]].map(([k, v]) => (
                        <Feature key={v}><b>{k}</b><span>{v}</span></Feature>
                      ))}
                    </Features>
                  </Card>
                ))}
              </Cards>
            </Main>
            <FooterLine />
          </Page>
          <ScrollTrack><Thumb /></ScrollTrack>
        </Viewport>
        <StatusBubble>https://iportal.host/cart.php?a=add&amp;pid=7</StatusBubble>
      </Window>
    </Screen>
  );
}
